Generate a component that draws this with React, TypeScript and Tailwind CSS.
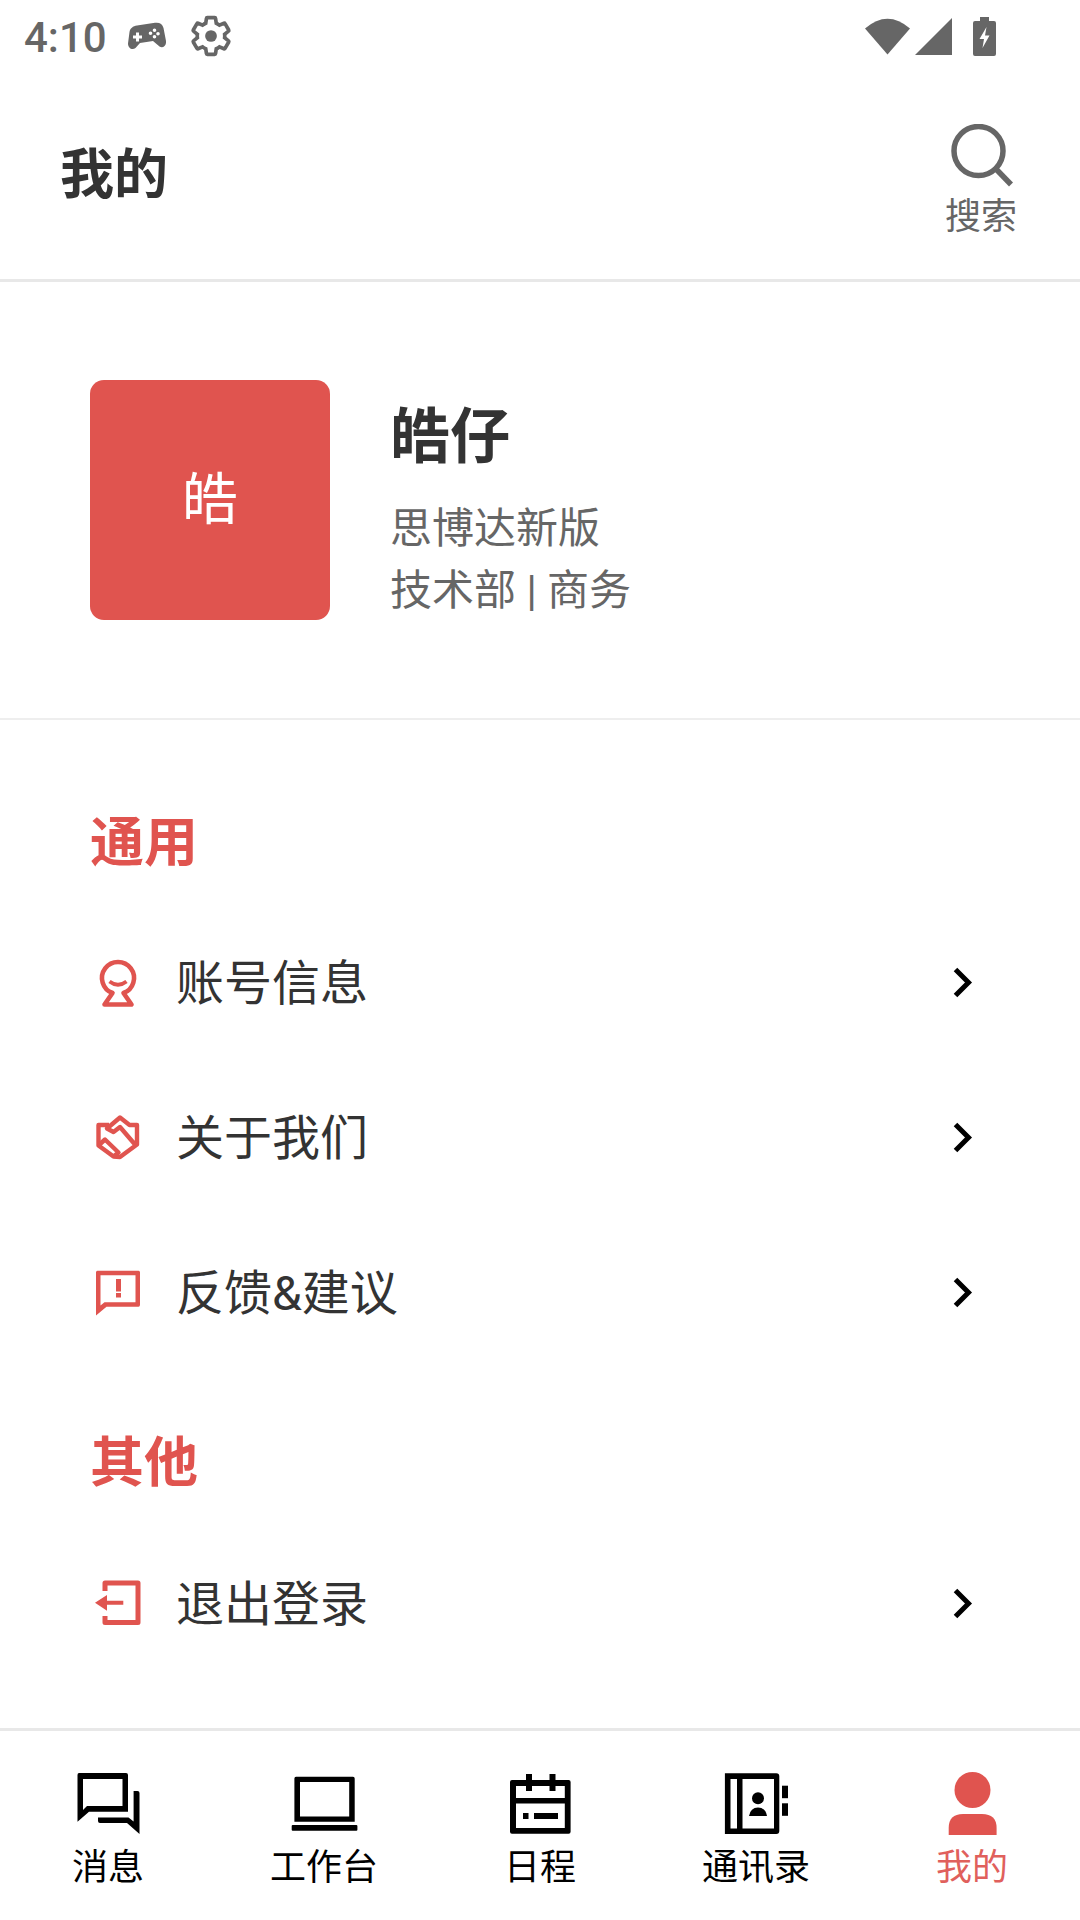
const CJK = "font-['Roboto','Noto_Sans_CJK_SC',sans-serif]";

function Chevron() {
  return (
    <svg width="40" height="40" viewBox="0 0 40 40" fill="none" stroke="#000" strokeWidth="5">
      <path d="M15.5 7.5L28.5 20.5L15.5 33.5" />
    </svg>
  );
}

function KeyIcon() {
  return (
    <svg width="60" height="60" viewBox="0 0 60 60" fill="none" stroke="#e0544f" strokeWidth="4.6">
      <path d="M24.5 41A16 16 0 1 1 35.5 41L43.5 52.5H16.5Z" strokeLinejoin="round" />
      <path d="M21.5 29.5Q30 36 38.5 29.5" strokeWidth="3.8" />
    </svg>
  );
}

function HandshakeIcon() {
  return (
    <svg width="60" height="60" viewBox="0 0 60 60" fill="none" stroke="#e0544f" strokeWidth="4.4" strokeLinejoin="round">
      <path d="M21 18H10.5V38.5L25.5 49.5L32 50L49 37.5V18H41.5L32 10.5L19 21.5L25.5 25L32 20L47 37.5" />
      <path d="M11.5 37.5L17 32.5L30.5 45.5L25.5 49.5" />
    </svg>
  );
}

function FeedbackIcon() {
  return (
    <svg width="60" height="60" viewBox="0 0 60 60">
      <path
        fillRule="evenodd"
        fill="#e0544f"
        d="M9.5 8.7H50.5Q52 8.7 52 10.2V42.7Q52 44.7 50.5 44.7H18.5L8 53.5V10.2Q8 8.7 9.5 8.7ZM12.5 13.2V43.5L16.5 40.2H47.5V13.2Z"
      />
      <rect x="28" y="17" width="5" height="12.5" fill="#e0544f" />
      <rect x="28" y="31" width="5" height="4.5" fill="#e0544f" />
    </svg>
  );
}

function LogoutIcon() {
  return (
    <svg width="60" height="60" viewBox="0 0 60 60" fill="none">
      <path d="M17 18V10H50V49.5H17V43" stroke="#e0544f" strokeWidth="5" strokeLinejoin="round" />
      <path d="M7 29.7L19 22V27.7H35.3V31.7H19V37.7Z" fill="#e0544f" />
    </svg>
  );
}

function MessageIcon() {
  return (
    <svg width="80" height="80" viewBox="0 0 80 80">
      <path
        fillRule="evenodd"
        d="M11 7H58Q60 7 60 9V45.7H21L9.5 55.7V9Q9.5 7 11 7ZM15 13V44L19 40H54.5V13Z"
      />
      <path d="M65.6 25H69.5Q71.5 25 71.5 27V68L59 57H32Q30 57 30 55V51.5H60.5L65.6 55.5Z" />
    </svg>
  );
}

function LaptopIcon() {
  return (
    <svg width="80" height="80" viewBox="0 0 80 80">
      <path fillRule="evenodd" d="M12 10.7H69Q70.7 10.7 70.7 12.5V55.7H10.4V12.5Q10.4 10.7 12 10.7ZM16 16V50.4H65.2V16Z" />
      <rect x="7.7" y="59" width="65.7" height="5.7" rx="1" />
    </svg>
  );
}

function CalendarIcon() {
  return (
    <svg width="80" height="80" viewBox="0 0 80 80">
      <path
        fillRule="evenodd"
        d="M12 14H68.6Q70.6 14 70.6 16V65.7Q70.6 67.7 68.6 67.7H12Q10 67.7 10 65.7V16Q10 14 12 14ZM16 20V32H64.8V20ZM16 37.5V62H64.8V37.5Z"
      />
      <rect x="26" y="8" width="6" height="17" />
      <rect x="49.5" y="8" width="6" height="17" />
      <rect x="23" y="47" width="5.5" height="6" />
      <rect x="34" y="47" width="24" height="6" />
    </svg>
  );
}

function BookIcon() {
  return (
    <svg width="80" height="80" viewBox="0 0 80 80">
      <path
        fillRule="evenodd"
        d="M8.9 7.3H60.3Q63.3 7.3 63.3 10.3V65Q63.3 68 60.3 68H8.9ZM14.5 13V62.5H21V13ZM26.5 13V62.5H58V13Z"
      />
      <rect x="66" y="19.7" width="6" height="12.5" />
      <rect x="66" y="37.3" width="6" height="12.5" />
      <circle cx="42" cy="32.3" r="6" />
      <path d="M33 50Q34.5 41.5 42 41.5Q49.5 41.5 51 50Z" />
    </svg>
  );
}

function MeIcon() {
  return (
    <svg width="80" height="80" viewBox="0 0 80 80" fill="#e0544f">
      <circle cx="40.5" cy="24" r="18" />
      <path d="M16.7 69V62Q16.7 48 31 48H50Q64.6 48 64.6 62V69Z" />
    </svg>
  );
}

function Row({ icon, label }: { icon: React.ReactNode; label: string }) {
  return (
    <div className="h-[155px] flex items-center pl-[88px] pr-[100px]">
      {icon}
      <span className="ml-[28px] mt-[5px] flex-1 text-[48px] leading-[64px] text-[#333333]">{label}</span>
      <Chevron />
    </div>
  );
}

function Tab({ icon, label, active }: { icon: React.ReactNode; label: string; active?: boolean }) {
  return (
    <div className="flex-1 flex flex-col items-center">
      {icon}
      <span className={`mt-[4px] text-[36px] leading-[36px] ${active ? "text-[#e0605c]" : "text-black"}`}>{label}</span>
    </div>
  );
}

export default function App() {
  return (
    <div className={`w-[1080px] h-[1920px] bg-white flex flex-col overflow-hidden ${CJK}`}>
      <div className="h-[72px] flex items-center pl-[24px] pr-[84px]">
        <span className="mt-[4px] text-[42px] leading-[60px] font-medium text-[#666666]">4:10</span>
        <svg className="ml-[21px]" width="38" height="28" viewBox="0 0 38 28" fill="#666666">
          <path
            fillRule="evenodd"
            d="M9 3.5L27 .8C31.5.2 34.5 2 35.5 6L38 19C38.6 23.5 35 26.5 31.5 24.5L25 19L12 21L7.5 26C4.5 28.5 0 26.5 0 21.5L1.5 10C2 6.5 5 4 9 3.5ZM8 10.5V13.5H5V16.5H8V19.5H11V16.5H14V13.5H11V10.5ZM26.5 6.5A1.8 1.8 0 1 0 26.5 10.1A1.8 1.8 0 1 0 26.5 6.5ZM22.5 9.5A1.8 1.8 0 1 0 22.5 13.1A1.8 1.8 0 1 0 22.5 9.5ZM30 10A1.8 1.8 0 1 0 30 13.6A1.8 1.8 0 1 0 30 10ZM26.5 13A1.8 1.8 0 1 0 26.5 16.6A1.8 1.8 0 1 0 26.5 13Z"
          />
        </svg>
        <svg className="ml-[23px]" width="44" height="44" viewBox="0 0 24 24" fill="none" stroke="#666666" strokeWidth="2">
          <path d="M19.43 12.98c.04-.32.07-.64.07-.98 0-.34-.03-.66-.07-.98l2.11-1.65c.19-.15.24-.42.12-.64l-2-3.46c-.12-.22-.39-.3-.61-.22l-2.49 1c-.52-.4-1.08-.73-1.69-.98l-.38-2.65C14.46 2.18 14.25 2 14 2h-4c-.25 0-.46.18-.49.42l-.38 2.65c-.61.25-1.17.59-1.69.98l-2.49-1c-.23-.09-.49 0-.61.22l-2 3.46c-.13.22-.07.49.12.64l2.11 1.65c-.04.32-.07.65-.07.98 0 .33.03.66.07.98l-2.11 1.65c-.19.15-.24.42-.12.64l2 3.46c.12.22.39.3.61.22l2.49-1c.52.4 1.08.73 1.69.98l.38 2.65c.03.24.24.42.49.42h4c.25 0 .46-.18.49-.42l.38-2.65c.61-.25 1.17-.59 1.69-.98l2.49 1c.23.09.49 0 .61-.22l2-3.46c.12-.22.07-.49-.12-.64l-2.11-1.65z" />
          <circle cx="12" cy="12" r="3.2" fill="#666666" stroke="none" />
        </svg>
        <div className="flex-1" />
        <svg width="46" height="38" viewBox="0 0 46 38" fill="#666666">
          <path d="M0 11.5Q22.5 -8 45 11.5L22.5 37.5Z" />
        </svg>
        <svg className="ml-[4px]" width="37" height="37" viewBox="0 0 37 37" fill="#666666">
          <path d="M0 37L37 0V37Z" />
        </svg>
        <svg className="ml-[21px]" width="23" height="39" viewBox="0 0 23 39">
          <path d="M7 0H16V4H21Q23 4 23 6V37Q23 39 21 39H2Q0 39 0 37V6Q0 4 2 4H7Z" fill="#666666" />
          <path d="M13.5 10L6.5 22H11L9.5 31L16.5 18.5H12Z" fill="#ffffff" />
        </svg>
      </div>

      <div className="h-[207px] flex items-center justify-between pl-[60px] pr-[63px]">
        <span className="text-[54px] leading-[64px] font-bold text-[#333333]">我的</span>
        <div className="flex flex-col items-center w-[72px]">
          <svg className="mt-[11px] ml-[2px]" width="66" height="64" viewBox="0 0 66 64" fill="none" stroke="#666666" strokeWidth="5.5">
            <circle cx="29.5" cy="27" r="24.5" />
            <path d="M46.5 44.5L62 60.5" />
          </svg>
          <span className="mt-[7px] text-[36px] leading-[44px] text-[#666666] whitespace-nowrap">搜索</span>
        </div>
      </div>
      <div className="h-[3px] bg-[#e8e8e8]" />

      <div className="h-[436px] flex items-center pl-[90px]">
        <div className="w-[240px] h-[240px] rounded-[14px] bg-[#e0544f] flex items-center justify-center text-white text-[56px] leading-[60px]">
          皓
        </div>
        <div className="ml-[60px] pt-[20px] flex flex-col">
          <span className="text-[60px] leading-[80px] font-bold text-[#333333]">皓仔</span>
          <span className="mt-[20px] text-[42px] leading-[62px] text-[#666666]">思博达新版</span>
          <span className="text-[42px] leading-[62px] text-[#666666]">技术部 | 商务</span>
        </div>
      </div>
      <div className="h-[2px] bg-[#eeeeee]" />

      <div className="pl-[90px] pt-[94px] text-[54px] leading-[60px] font-bold text-[#e0544f]">通用</div>
      <div className="mt-[30px]">
        <Row icon={<KeyIcon />} label="账号信息" />
        <Row icon={<HandshakeIcon />} label="关于我们" />
        <Row icon={<FeedbackIcon />} label="反馈&建议" />
      </div>
      <div className="pl-[90px] mt-[65px] text-[54px] leading-[60px] font-bold text-[#e0544f]">其他</div>
      <div className="mt-[31px]">
        <Row icon={<LogoutIcon />} label="退出登录" />
      </div>

      <div className="flex-1" />
      <div className="h-[192px] border-t-[3px] border-[#e8e8e8] pt-[35px] flex">
        <Tab icon={<MessageIcon />} label="消息" />
        <Tab icon={<LaptopIcon />} label="工作台" />
        <Tab icon={<CalendarIcon />} label="日程" />
        <Tab icon={<BookIcon />} label="通讯录" />
        <Tab icon={<MeIcon />} label="我的" active />
      </div>
    </div>
  );
}
